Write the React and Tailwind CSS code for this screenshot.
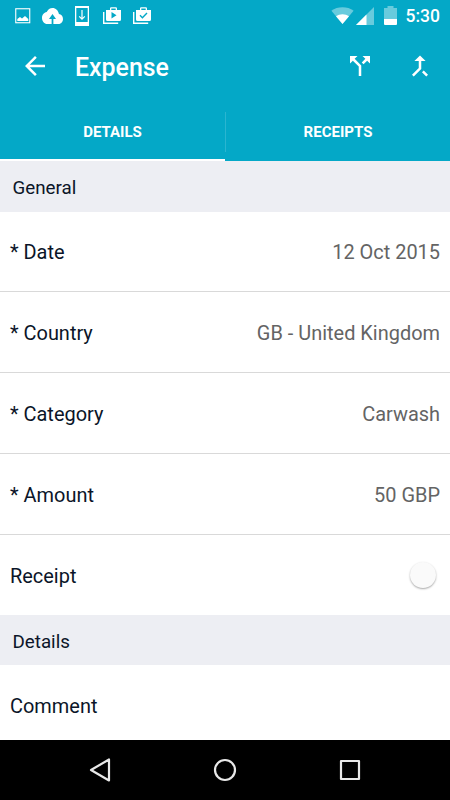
import React from 'react';

const rows = [
  { label: '* Date', value: '12 Oct 2015' },
  { label: '* Country', value: 'GB - United Kingdom' },
  { label: '* Category', value: 'Carwash' },
  { label: '* Amount', value: '50 GBP' },
];

// Status bar notification icons
const ImageIcon = () => (
  <svg className="w-4 h-4" viewBox="0 0 16 16" fill="none">
    <rect x="0.75" y="0.75" width="14" height="14" stroke="white" strokeWidth="1.1" />
    <path d="M2.3 13V11l2.7-2 2 1.5L10 8l3.3 3v2z" fill="white" />
  </svg>
);

const CloudIcon = () => (
  <svg className="w-[21px] h-4 ml-[11px]" viewBox="0 4 24 16" preserveAspectRatio="none" fill="white">
    <path d="M19.35 10.04C18.67 6.59 15.64 4 12 4 9.11 4 6.6 5.64 5.35 8.04 2.34 8.36 0 10.91 0 14c0 3.31 2.69 6 6 6h5v-5H8l4-5 4 5h-3v5h6c2.76 0 5-2.24 5-5 0-2.64-2.05-4.78-4.65-4.96z" />
  </svg>
);

const PhoneIcon = () => (
  <svg className="w-[14px] h-5 ml-3" viewBox="0 0 14 20">
    <path d="M0 0h14v20H0zM1.3 2v14h11.4V2z" fill="white" fillRule="evenodd" />
    <path d="M7 4v9M4.2 10.3 7 13.1l2.8-2.8" stroke="white" strokeWidth="1.2" fill="none" />
  </svg>
);

const BagIcon = ({ children, className }) => (
  <svg className={`w-[18px] h-[17px] ${className}`} viewBox="0 0 18 17" fill="none">
    <path d="M0.7 5v11.2h14.5" stroke="white" strokeWidth="1.4" />
    <path
      d="M3 3h4V1.4Q7 .2 8.2 .2h4.6Q14 .2 14 1.4V3h4v9.5q0 1.5-1.5 1.5h-12Q3 14 3 12.5zM8.3 1.5V3h4.4V1.5z"
      fill="white"
      fillRule="evenodd"
    />
    {children}
  </svg>
);

const StatusBar = () => (
  <div className="h-[30px] flex items-center pl-[15px] pr-[10px] pt-px">
    <ImageIcon />
    <CloudIcon />
    <PhoneIcon />
    <BagIcon className="ml-[14px]">
      <path d="M8.5 5v6.5l5-3.2z" fill="#04a8c7" />
    </BagIcon>
    <BagIcon className="ml-3">
      <path d="m7 8.3 2.4 2.4 4.6-4.8" stroke="#04a8c7" strokeWidth="1.4" />
    </BagIcon>
    <svg className="w-[23px] h-[17px] ml-auto" viewBox="0 0 23 17" fill="white">
      <path d="M.4 3.8C6.5-.8 16.5-.8 22.6 3.8L11.5 17z" opacity="0.4" />
      <path d="M5 9.3c3.5-2.9 9.5-2.9 13 0L11.5 17z" />
    </svg>
    <svg className="w-[18px] h-[18px] ml-[2px]" viewBox="0 0 18 18" fill="white">
      <path d="M18 0v18H0z" opacity="0.4" />
      <path d="M10.5 7.5V18H0z" />
    </svg>
    <svg className="w-[13px] h-[19px] ml-[10px]" viewBox="0 0 13 19" fill="white">
      <path d="M3.5 0h6v2H13v11H0V2h3.5z" opacity="0.4" />
      <path d="M0 13h13v5q0 1-1 1H1q-1 0-1-1z" />
    </svg>
    <span className="ml-[9px] pt-px text-[17.5px] leading-5 font-medium">5:30</span>
  </div>
);

const AppBar = () => (
  <div className="h-[71px] flex items-center pt-px pl-5 pr-[15px]">
    <svg className="w-[30px] h-[30px]" viewBox="0 0 24 24" fill="white">
      <path d="M20 11H7.83l5.59-5.59L12 4l-8 8 8 8 1.41-1.41L7.83 13H20v-2z" />
    </svg>
    <h1 className="ml-[25px] pt-[3px] text-[24.9px] leading-8 font-medium">Expense</h1>
    <svg className="w-[30px] h-[30px] ml-auto" viewBox="0 0 24 24" fill="white">
      <path d="M14 4l2.29 2.29-2.88 2.88 1.42 1.42 2.88-2.88L20 10V4zM10 4H4v6l2.29-2.29 4.71 4.7V20h2v-8.41l-5.29-5.3z" />
    </svg>
    <svg className="w-[30px] h-[30px] ml-[30px]" viewBox="0 0 24 24" fill="white">
      <path d="M17 20.41L18.41 19 15 15.59 13.59 17 17 20.41zM7.5 8H11v5.59L5.59 19 7 20.41l6-6V8h3.5L12 3.5 7.5 8z" />
    </svg>
  </div>
);

const Tabs = () => (
  <div className="h-[60px] flex text-[15px] font-bold">
    <div className="w-[225px] flex flex-col">
      <div className="flex-1 flex items-center justify-center pt-[5px]">DETAILS</div>
      <div className="h-[2.5px] bg-white" />
    </div>
    <div className="w-px h-10 mt-[11px] bg-[#2bb5d0]" />
    <div className="flex-1 h-[57px] flex items-center justify-center pt-[6px]">RECEIPTS</div>
  </div>
);

const SectionHeader = ({ title, className = '' }) => (
  <div className={`shrink-0 bg-[#edeef3] pl-[12.5px] pt-[3px] text-[18.75px] flex items-center ${className}`}>{title}</div>
);

const App = () => (
  <div className="w-[450px] h-[800px] overflow-hidden flex flex-col bg-white font-['Roboto',sans-serif] text-[#0b1528]">
    <header className="shrink-0 bg-[#04a8c7] text-white">
      <StatusBar />
      <AppBar />
      <Tabs />
    </header>

    <main className="flex-1 min-h-0 overflow-hidden flex flex-col text-[19.95px]">
      <SectionHeader title="General" className="h-[50.5px]" />
      {rows.map((row) => (
        <div
          key={row.label}
          className="shrink-0 h-[80.8px] px-[10px] pt-[4px] flex items-center justify-between border-b border-[#d9d9d9]"
        >
          <span>{row.label}</span>
          <span className="text-[#646464]">{row.value}</span>
        </div>
      ))}
      <div className="shrink-0 h-[80.3px] pl-[10px] pr-[14px] flex items-center justify-between">
        <span className="pt-[4px]">Receipt</span>
        <div className="w-[26px] h-[26px] rounded-full bg-[#fafafa] shadow-[0_1px_2px_rgba(0,0,0,0.35)]" />
      </div>
      <SectionHeader title="Details" className="h-[50.5px]" />
      <div className="shrink-0 h-[81px] px-[10px] pt-[2px] flex items-center">Comment</div>
    </main>

    {/* System navigation */}
    <nav className="shrink-0 h-[60px] bg-black flex items-center justify-between px-[87px]">
      <svg className="w-[26px] h-[26px]" viewBox="0 0 26 26" fill="none" stroke="#e8e8e8" strokeWidth="2.2" strokeLinejoin="round">
        <path d="M22 2.5v21L4 13z" />
      </svg>
      <svg className="w-[26px] h-[26px]" viewBox="0 0 26 26" fill="none" stroke="#e8e8e8" strokeWidth="2.2">
        <circle cx="13" cy="13" r="10" />
      </svg>
      <svg className="w-[26px] h-[26px]" viewBox="0 0 26 26" fill="none" stroke="#e8e8e8" strokeWidth="2.2" strokeLinejoin="round">
        <rect x="4" y="4" width="18" height="18" />
      </svg>
    </nav>
  </div>
);

export default App;
